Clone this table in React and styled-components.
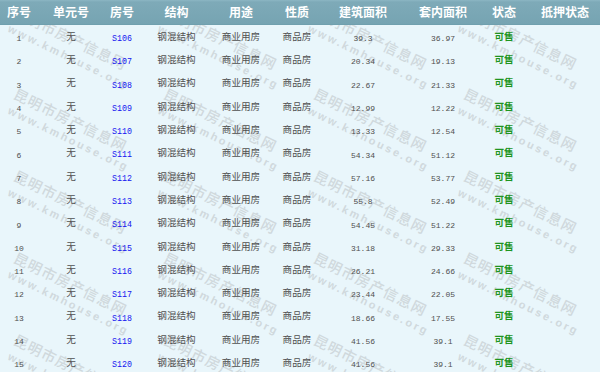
import React from "react";
import styled, { createGlobalStyle } from "styled-components";

const Global = createGlobalStyle`
  html, body { margin: 0; padding: 0; background: #e9f6fb; }
  body { width: 600px; height: 372px; overflow: hidden; }
`;

const COLS = [38, 66, 36, 73, 56, 56, 76, 84, 38, 84];
const HEADERS = ["序号", "单元号", "房号", "结构", "用途", "性质", "建筑面积", "套内面积", "状态", "抵押状态"];

const DATA = [
  ["S106", "39.3", "36.97"],
  ["S107", "20.34", "19.13"],
  ["S108", "22.67", "21.33"],
  ["S109", "12.99", "12.22"],
  ["S110", "13.33", "12.54"],
  ["S111", "54.34", "51.12"],
  ["S112", "57.16", "53.77"],
  ["S113", "55.8", "52.49"],
  ["S114", "54.45", "51.22"],
  ["S115", "31.18", "29.33"],
  ["S116", "26.21", "24.66"],
  ["S117", "23.44", "22.05"],
  ["S118", "18.66", "17.55"],
  ["S119", "41.56", "39.1"],
  ["S120", "41.56", "39.1"],
];

const Page = styled.div`
  position: relative;
  width: 600px;
  height: 372px;
  overflow: hidden;
  background: #e9f6fb;
  font-family: "Noto Sans CJK SC", "Liberation Sans", sans-serif;
`;

const Table = styled.div`
  position: relative;
  z-index: 1;
  display: flex;
  flex-direction: column;
  width: 607px;
`;

const HeaderRow = styled.div`
  position: relative;
  z-index: 2;
  display: grid;
  grid-template-columns: ${COLS.map((c) => c + "px").join(" ")};
  height: 25px;
  align-items: center;
  background: linear-gradient(#8cb6c3 0px, #7eaab8 2px, #76a4b2 100%);
  border-bottom: 1px solid #70a0ae;
  box-sizing: border-box;
`;

const HeadCell = styled.div`
  text-align: center;
  color: #ffffff;
  font-size: 12px;
  font-weight: bold;
  line-height: 1;
  white-space: nowrap;
`;

const Row = styled.div`
  display: grid;
  grid-template-columns: ${COLS.map((c) => c + "px").join(" ")};
  height: 23.3px;
  align-items: center;
`;

const Cell = styled.div`
  text-align: center;
  white-space: nowrap;
  line-height: 1;
  padding-top: ${(p) => (p.$mono ? "5px" : "0")};
  color: ${(p) => (p.$tone === "blue" ? "#1414f0" : p.$tone === "green" ? "#1f951f" : "#505050")};
  font-weight: ${(p) => (p.$tone === "green" ? "bold" : "normal")};
  font-family: ${(p) =>
    p.$mono ? '"Liberation Mono", "DejaVu Sans Mono", monospace' : '"Noto Sans CJK SC", sans-serif'};
  font-size: ${(p) => (p.$tone === "blue" ? "8.3px" : p.$mono ? "8px" : "9.6px")};
`;

const Watermark = styled.div`
  position: absolute;
  left: 17px;
  top: 6px;
  z-index: 0;
  display: grid;
  grid-template-columns: repeat(4, 150px);
  grid-auto-rows: 82px;
  pointer-events: none;
`;

const Tile = styled.div`
  transform: rotate(26deg);
  transform-origin: 0 0;
  display: flex;
  flex-direction: column;
  align-items: flex-start;
  white-space: nowrap;
`;

const MarkCn = styled.div`
  font-family: "Noto Sans CJK SC", sans-serif;
  font-size: 14.5px;
  font-weight: 500;
  letter-spacing: 1px;
  line-height: 16px;
  color: #d0d9dd;
  margin-top: -3px;
`;

const MarkEn = styled.div`
  font-family: "Liberation Sans", sans-serif;
  font-size: 11px;
  font-weight: bold;
  letter-spacing: 2.4px;
  line-height: 12px;
  color: #d0d9dd;
  margin-top: 4px;
  margin-left: 2px;
`;

export default function App() {
  const tiles = [];
  for (let i = 0; i < 20; i++) tiles.push(i);
  return (
    <Page>
      <Global />
      <Watermark>
        {tiles.map((t) => (
          <Tile key={t}>
            <MarkCn>昆明市房产信息网</MarkCn>
            <MarkEn>www.kmhouse.org</MarkEn>
          </Tile>
        ))}
      </Watermark>
      <Table>
        <HeaderRow>
          {HEADERS.map((h) => (
            <HeadCell key={h}>{h}</HeadCell>
          ))}
        </HeaderRow>
        {DATA.map(([room, area, inner], i) => (
          <Row key={room}>
            <Cell $mono>{i + 1}</Cell>
            <Cell>无</Cell>
            <Cell $mono $tone="blue">{room}</Cell>
            <Cell>钢混结构</Cell>
            <Cell>商业用房</Cell>
            <Cell>商品房</Cell>
            <Cell $mono>{area}</Cell>
            <Cell $mono>{inner}</Cell>
            <Cell $tone="green">可售</Cell>
            <Cell></Cell>
          </Row>
        ))}
      </Table>
    </Page>
  );
}
